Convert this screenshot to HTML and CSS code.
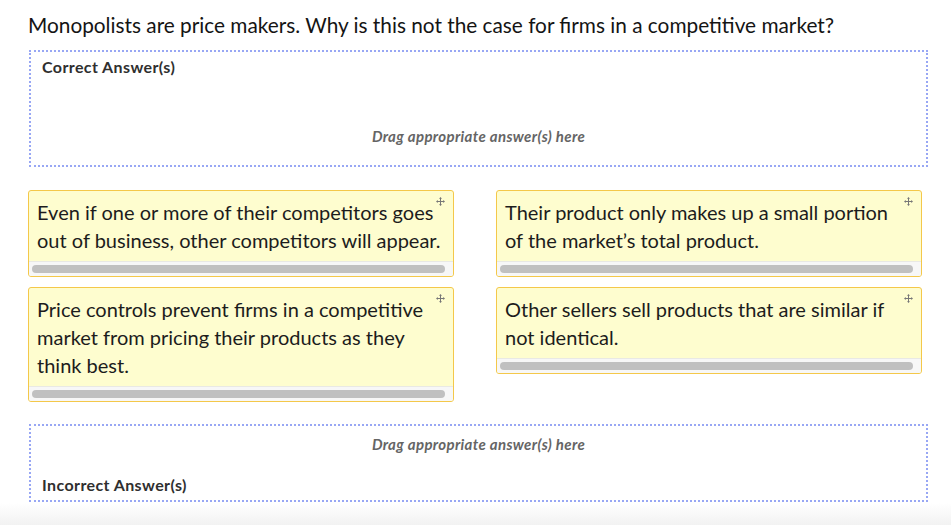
FILE: index.html
```html
<!DOCTYPE html>
<html lang="en">
<head>
<meta charset="utf-8">
<title>Drag and drop question</title>
<link rel="stylesheet" href="styles.css">
</head>
<body>
<div class="page">
  <h1 class="question">Monopolists are price makers. Why is this not the case for firms in a competitive market?</h1>

  <div class="zone zone-correct">
    <div class="zone-label">Correct Answer(s)</div>
    <div class="zone-hint">Drag appropriate answer(s) here</div>
  </div>

  <div class="cards">
    <div class="col">
      <div class="card">
        <svg class="move" viewBox="0 0 9 9" width="9" height="9"><path d="M4.5 1v7M1 4.5h7" stroke="#777" stroke-width="1"/><path d="M4.5 0L3 1.8h3zM4.5 9L3 7.2h3zM0 4.5L1.8 3v3zM9 4.5L7.2 3v3z" fill="#777"/></svg>
        <div class="card-text">Even if one or more of their competitors goes<br>out of business, other competitors will appear.</div>
        <div class="card-foot"><div class="thumb"></div></div>
      </div>
      <div class="card">
        <svg class="move" viewBox="0 0 9 9" width="9" height="9"><path d="M4.5 1v7M1 4.5h7" stroke="#777" stroke-width="1"/><path d="M4.5 0L3 1.8h3zM4.5 9L3 7.2h3zM0 4.5L1.8 3v3zM9 4.5L7.2 3v3z" fill="#777"/></svg>
        <div class="card-text">Price controls prevent firms in a competitive<br>market from pricing their products as they<br>think best.</div>
        <div class="card-foot"><div class="thumb"></div></div>
      </div>
    </div>
    <div class="col">
      <div class="card">
        <svg class="move" viewBox="0 0 9 9" width="9" height="9"><path d="M4.5 1v7M1 4.5h7" stroke="#777" stroke-width="1"/><path d="M4.5 0L3 1.8h3zM4.5 9L3 7.2h3zM0 4.5L1.8 3v3zM9 4.5L7.2 3v3z" fill="#777"/></svg>
        <div class="card-text">Their product only makes up a small portion<br>of the market’s total product.</div>
        <div class="card-foot"><div class="thumb"></div></div>
      </div>
      <div class="card">
        <svg class="move" viewBox="0 0 9 9" width="9" height="9"><path d="M4.5 1v7M1 4.5h7" stroke="#777" stroke-width="1"/><path d="M4.5 0L3 1.8h3zM4.5 9L3 7.2h3zM0 4.5L1.8 3v3zM9 4.5L7.2 3v3z" fill="#777"/></svg>
        <div class="card-text">Other sellers sell products that are similar if<br>not identical.</div>
        <div class="card-foot"><div class="thumb"></div></div>
      </div>
    </div>
  </div>

  <div class="zone zone-incorrect">
    <div class="zone-hint">Drag appropriate answer(s) here</div>
    <div class="zone-label">Incorrect Answer(s)</div>
  </div>
</div>
</body>
</html>
```
FILE: styles.css
```css
html {
  min-height: 100%;
  background: linear-gradient(to bottom, #ffffff 0, #ffffff 503px, #f2f2f2 525px) no-repeat;
}
body {
  margin: 0;
  font-family: Lato, "Liberation Sans", sans-serif;
  color: #1b1b1b;
}
.page {
  padding-left: 28px;
  width: 900px;
}
.question {
  margin: 0;
  padding-top: 13px;
  font-size: 20.8px;
  line-height: 24px;
  font-weight: 400;
  color: #141414;
  white-space: nowrap;
}
.zone {
  margin-left: 1px;
  width: 895px;
  border: 2px dotted #98a7f4;
}
.zone-correct {
  margin-top: 13px;
  padding: 6px 0 20px;
}
.zone-incorrect {
  margin-top: 22px;
  padding: 10px 0 6px;
}
.zone-label {
  padding-left: 11px;
  font-size: 16px;
  line-height: 18px;
  font-weight: 700;
  letter-spacing: 0.4px;
  color: #2f2f2f;
}
.zone-hint {
  text-align: center;
  font-size: 15px;
  line-height: 17px;
  font-weight: 700;
  font-style: italic;
  letter-spacing: 0.35px;
  color: #656565;
}
.zone-correct .zone-hint {
  margin-top: 52px;
}
.zone-incorrect .zone-hint {
  margin-bottom: 23px;
}
.cards {
  margin-top: 23px;
  width: 894px;
  display: grid;
  grid-template-columns: 426px 426px;
  column-gap: 42px;
  align-items: start;
}
.col {
  display: flex;
  flex-direction: column;
  gap: 10px;
}
.card {
  position: relative;
  border: 1px solid #f4c84a;
  border-radius: 3px;
  background: #fefdcf;
  overflow: hidden;
}
.move {
  position: absolute;
  top: 6px;
  right: 8px;
  display: block;
}
.card-text {
  padding: 7px 10px 7px 8px;
  font-size: 20px;
  line-height: 28px;
  color: #1c1c1c;
  white-space: nowrap;
}
.card-foot {
  border-top: 1px solid #e9e9e4;
  background: #f7f7f7;
  padding: 3px 8px 3px 3px;
}
.thumb {
  height: 8px;
  border-radius: 4px;
  background: #c0c0c0;
}
```
